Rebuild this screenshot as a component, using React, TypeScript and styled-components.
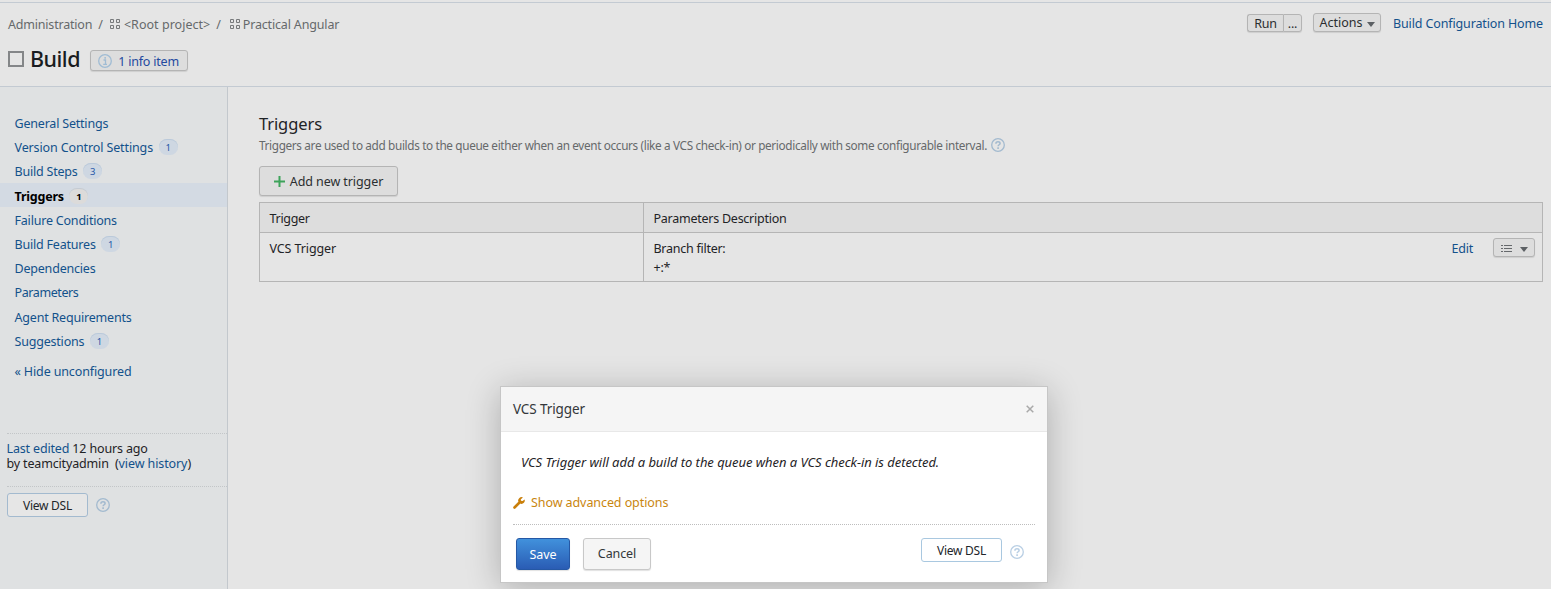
import React from "react";
import styled, { createGlobalStyle } from "styled-components";

const Global = createGlobalStyle`
  * { box-sizing: border-box; }
  body {
    margin: 0;
    background: #e5e5e5;
    color: #1f2326;
    font: 12.5px/15px "Noto Sans", sans-serif;
    letter-spacing: -0.2px;
    overflow: hidden;
  }
  a { color: #13518b; text-decoration: none; }
`;

const T = styled.span<{ $ls?: number }>`
  white-space: pre;
  letter-spacing: ${(p) => p.$ls ?? -0.2}px;
`;

const Page = styled.div`
  height: 589px;
  display: flex;
  flex-direction: column;
`;

const Header = styled.header`
  height: 85px;
  flex: none;
  margin-top: 2px;
  border-top: 1px solid #c3cad2;
  border-bottom: 1px solid #c3cad2;
  padding: 10px 8px 0;
`;

const HeaderRow = styled.div`
  display: flex;
  justify-content: space-between;
  height: 21px;
`;

const Crumbs = styled.nav`
  display: flex;
  align-items: center;
  height: 22px;
  color: #66696b;
`;

const ProjectName = styled(T)`
  margin-left: 2px;
`;

const Slash = styled.span<{ $after: number }>`
  margin: 0 ${(p) => p.$after}px 0 6px;
`;

const HeaderActions = styled.div`
  display: flex;
  height: 19px;
  align-items: flex-end;
`;

const SmallButton = styled.button<{ $w: number; $h?: number }>`
  width: ${(p) => p.$w}px;
  height: ${(p) => p.$h ?? 19}px;
  display: flex;
  align-items: center;
  justify-content: center;
  gap: 4px;
  padding: 0;
  font: inherit;
  letter-spacing: inherit;
  color: #2b2e30;
  background: #dddddd;
  border: 1px solid #b4b4b4;
  border-radius: 3px;
  box-shadow: 0 1px 1px rgba(0, 0, 0, 0.1);
`;

const ButtonGroup = styled.div`
  display: flex;
  margin-right: 11px;
  ${SmallButton}:first-child { border-radius: 3px 0 0 3px; border-right: 0; }
  ${SmallButton}:last-child { border-radius: 0 3px 3px 0; }
`;

const HomeLink = styled.a`
  margin: 0 0 1px 12px;
  width: 150px;
`;

const Caret = styled.span<{ $left?: number }>`
  border: 4px solid transparent;
  border-top: 5px solid #5c6064;
  border-bottom: 0;
  margin: 3px 0 0 ${(p) => p.$left ?? 0}px;
`;

const TitleRow = styled.div`
  display: flex;
  align-items: center;
  height: 30px;
  margin-top: 10px;
`;

const StatusBox = styled.span`
  width: 16px;
  height: 16px;
  border: 2px solid #848688;
  margin-right: 6px;
`;

const Title = styled.h1`
  margin: 0;
  width: 60px;
  font-size: 21.5px;
  line-height: 30px;
  font-weight: 500;
  letter-spacing: -0.5px;
  color: #1a1c20;
`;

const InfoButton = styled(SmallButton)`
  color: #2449a0;
  margin-top: 3px;
  padding: 1px 1px 0 0;
  gap: 6px;
`;

const Body = styled.div`
  flex: 1;
  display: flex;
`;

const Sidebar = styled.aside`
  width: 228px;
  flex: none;
  background: #dfe1e2;
  border-right: 1px solid #c3c8cd;
  padding-top: 24px;
`;

const NavItem = styled.div<{ $active?: boolean; $low?: boolean }>`
  height: ${(p) => (p.$low ? 25 : 24)}px;
  padding: ${(p) => (p.$low ? 1 : 0)}px 0 0 14.5px;
  display: flex;
  align-items: center;
  color: ${(p) => (p.$active ? "#000" : "#13518b")};
  font-weight: ${(p) => (p.$active ? 700 : 400)};
  background: ${(p) => (p.$active ? "#d3dae3" : "transparent")};
  ${(p) => (p.$active ? "padding-top: 2px;" : "")}
`;

const Count = styled.span<{ $active?: boolean }>`
  width: 19px;
  height: 16px;
  margin-left: 5.5px;
  border-radius: 8px;
  background: ${(p) => (p.$active ? "#dcdbda" : "#ced7e2")};
  box-shadow: inset 0 1px 0 ${(p) => (p.$active ? "#c4cbd3" : "#bac9da")};
  color: ${(p) => (p.$active ? "#000" : "#2456a8")};
  font-size: 9.5px;
  line-height: 17px;
  text-align: center;
`;

const HideLink = styled.a`
  display: block;
  margin: 11px 0 0 14.5px;
`;

const Edited = styled.div`
  margin: 54px 0 0 6.5px;
  height: 54px;
  border-top: 1px dotted #c3c6c8;
  border-bottom: 1px dotted #c3c6c8;
  padding-top: 7px;
`;

const DslRow = styled.div<{ $pad: string }>`
  display: flex;
  align-items: center;
  gap: 8px;
  padding: ${(p) => p.$pad};
`;

const DslButton = styled.button<{ $bg: string; $border: string }>`
  width: 81px;
  height: 24px;
  padding: 0;
  font: inherit;
  font-size: 12px;
  letter-spacing: -0.25px;
  color: #22262a;
  background: ${(p) => p.$bg};
  border: 1px solid ${(p) => p.$border};
  border-radius: 3px;
`;

const Main = styled.main`
  flex: 1;
  padding: 26px 8px 0 31px;
`;

const SectionTitle = styled.h2`
  margin: 0;
  font-size: 16.5px;
  line-height: 22px;
  font-weight: 400;
  letter-spacing: -0.1px;
`;

const Note = styled.p`
  margin: 2px 0 0;
  height: 16px;
  display: flex;
  align-items: center;
  gap: 4px;
  font-size: 11.75px;
  color: #66696b;
`;

const AddButton = styled(SmallButton)`
  margin: 13px 0 6px;
  gap: 5px;
`;

const Table = styled.div`
  display: grid;
  grid-template-columns: 384px 1fr;
  grid-template-rows: 30px 48px;
  border: 1px solid #b5b5b5;
`;

const Cell = styled.div<{ $head?: boolean; $left?: boolean }>`
  display: flex;
  align-items: flex-start;
  justify-content: space-between;
  padding: 8px 7px 0 9.5px;
  background: ${(p) => (p.$head ? "#dddddd" : "transparent")};
  border-bottom: ${(p) => (p.$head ? "1px solid #b5b5b5" : "0")};
  border-right: ${(p) => (p.$left ? "1px solid #b5b5b5" : "0")};
`;

const Filter = styled.div`
  display: flex;
  flex-direction: column;
  gap: 4px;
`;

const RowActions = styled.div`
  display: flex;
  gap: 20px;
  margin-top: -3px;
  align-items: flex-start;
`;

const EditLink = styled.a`
  margin-top: 3px;
`;

const Dialog = styled.section`
  position: absolute;
  left: 500px;
  top: 386px;
  width: 548px;
  height: 197px;
  background: #fff;
  border: 1px solid #c6c6c6;
  box-shadow: 0 5px 32px rgba(0, 0, 0, 0.24);
`;

const DialogHead = styled.div`
  height: 45px;
  padding: 0 13px 0 12px;
  display: flex;
  align-items: center;
  justify-content: space-between;
  background: #f5f5f5;
  border-bottom: 1px solid #e8e8e8;
  font-size: 13.5px;
  color: #33373a;
`;

const Description = styled.p`
  margin: 22px 0 0 20px;
  font-size: 13px;
  line-height: 16px;
  font-style: italic;
`;

const Advanced = styled.div`
  display: flex;
  align-items: center;
  gap: 6px;
  margin: 25px 12px 0;
  height: 30px;
  padding-bottom: 14px;
  border-bottom: 1px dotted #bdbdbd;
  color: #c9860f;
`;

const Footer = styled.div`
  display: flex;
  padding: 13px 23px 0 15px;
`;

const DialogButton = styled.button<{ $primary?: boolean }>`
  width: ${(p) => (p.$primary ? 54 : 68)}px;
  height: 32px;
  padding: 0 0 ${(p) => (p.$primary ? 0 : 2)}px;
  margin-right: 13px;
  border-radius: 3px;
  font: inherit;
  letter-spacing: -0.1px;
  color: ${(p) => (p.$primary ? "#fff" : "#33373a")};
  background: ${(p) => (p.$primary ? "linear-gradient(#4191dc, #2a5cb4)" : "#f5f5f5")};
  border: 1px solid ${(p) => (p.$primary ? "#2558a5" : "#c8c8c8")};
  box-shadow: 0 1px 1px rgba(0, 0, 0, 0.12);
`;

const Spacer = styled.div`
  flex: 1;
`;

const HelpSvg = styled.svg<{ $down?: number }>`
  flex: none;
  margin-top: ${(p) => p.$down ?? 0}px;
`;

const Help = ({ color = "#a3bacf", down }: { color?: string; down?: number }) => (
  <HelpSvg $down={down} width="14" height="14" viewBox="0 0 14 14" fill="none" stroke={color}>
    <circle cx="7" cy="7" r="6.3" strokeWidth="1.3" />
    <path d="M4.900 5.700C4.900 4.400 5.900 3.700 7 3.700s2.100.7 2.100 1.700c0 1.300-2 1.400-2 2.900" strokeWidth="1.500" />
    <path d="M7.100 9.300v1.600" strokeWidth="1.600" />
  </HelpSvg>
);

const Info = () => (
  <svg width="14" height="14" viewBox="0 0 14 14" fill="none" stroke="#a0bcd4">
    <circle cx="7" cy="7" r="6.300" strokeWidth="1.300" />
    <path d="M5.500 6h2v4M5.200 10.300h3.800" strokeWidth="1.300" />
    <path d="M6.400 3.900h1.500" strokeWidth="1.600" />
  </svg>
);

const ProjectIcon = () => (
  <svg width="11" height="11" viewBox="0 0 11 11" fill="none" stroke="#77797b">
    <path d="M.5.5h3v3h-3zM6.500.5h3v3h-3zM.5 6.500h3v3h-3zM6.500 6.500h3v3h-3z" />
  </svg>
);

const Plus = () => (
  <svg width="11" height="11" viewBox="0 0 11 11" stroke="#3da35a" strokeWidth="2">
    <path d="M5.500 0v11M0 5.500h11" />
  </svg>
);

const ListIcon = () => (
  <svg width="11" height="11" viewBox="0 0 11 11" stroke="#66696c">
    <path d="M0 3.500h2M3 3.500h8M0 6.500h2M3 6.500h8M0 9.500h2M3 9.500h8" />
  </svg>
);

const Wrench = () => (
  <svg width="12" height="12" viewBox="0 0 12 12">
    <path d="M1.500 10.500 7 5" stroke="#c97f0a" strokeWidth="2.600" strokeLinecap="round" />
    <path d="M10 .5A3.400 3.400 0 0 0 5.200 4.300L7.700 6.800A3.400 3.400 0 0 0 11.600 2.400L9.600 4 7.900 3.700 7.800 2.200z" fill="#c97f0a" />
  </svg>
);

const Close = () => (
  <svg width="8" height="8" viewBox="0 0 8 8" stroke="#a9a9a9" strokeWidth="1.500">
    <path d="M.7.7l6.600 6.600M7.300.7L.7 7.300" />
  </svg>
);

const nav: { label: string; count?: number; ls?: number; low?: boolean; active?: boolean }[] = [
  { label: "General Settings" },
  { label: "Version Control Settings", count: 1, ls: -0.12 },
  { label: "Build Steps", count: 3 },
  { label: "Triggers", count: 1, active: true },
  { label: "Failure Conditions", low: true },
  { label: "Build Features", count: 1 },
  { label: "Dependencies" },
  { label: "Parameters", ls: -0.4 },
  { label: "Agent Requirements", low: true },
  { label: "Suggestions", count: 1 },
];

export default function App() {
  return (
    <Page>
      <Global />
      <Header>
        <HeaderRow>
          <Crumbs>
            <T>Administration</T>
            <Slash $after={7}>/</Slash>
            <ProjectIcon />
            <T $ls={0.03}>{" <Root project>"}</T>
            <Slash $after={9}>/</Slash>
            <ProjectIcon />
            <ProjectName $ls={-0.16}>Practical Angular</ProjectName>
          </Crumbs>
          <HeaderActions>
            <ButtonGroup>
              <SmallButton $w={36} $h={18}>Run</SmallButton>
              <SmallButton $w={19} $h={18}>...</SmallButton>
            </ButtonGroup>
            <SmallButton $w={68}>
              <T $ls={0}>Actions</T>
              <Caret />
            </SmallButton>
            <HomeLink>
              <T $ls={-0.13}>Build Configuration Home</T>
            </HomeLink>
          </HeaderActions>
        </HeaderRow>
        <TitleRow>
          <StatusBox />
          <Title>Build</Title>
          <InfoButton $w={98} $h={21}>
            <Info />
            1 info item
          </InfoButton>
        </TitleRow>
      </Header>
      <Body>
        <Sidebar>
          {nav.map((n) => (
            <NavItem key={n.label} $active={n.active} $low={n.low}>
              <T $ls={n.ls}>{n.label}</T>
              {n.count && <Count $active={n.active}>{n.count}</Count>}
            </NavItem>
          ))}
          <HideLink>
            <T $ls={-0.13}>« Hide unconfigured</T>
          </HideLink>
          <Edited>
            <T $ls={-0.16}><a>Last edited</a> 12 hours ago</T>
            <br />
            <T $ls={-0.16}>{"by teamcityadmin  "}</T>
            <T $ls={-0.1}>
              (<a>view history</a>)
            </T>
          </Edited>
          <DslRow $pad="6px 0 0 7px">
            <DslButton $bg="#e6e6e6" $border="#a3bacf">
              View DSL
            </DslButton>
            <Help />
          </DslRow>
        </Sidebar>
        <Main>
          <SectionTitle>Triggers</SectionTitle>
          <Note>
            <T $ls={-0.342}>
              Triggers are used to add builds to the queue either when an event occurs (like a VCS check-in) or periodically with some configurable interval.
            </T>
            <Help />
          </Note>
          <AddButton $w={139} $h={30}>
            <Plus />
            <T $ls={-0.08}>Add new trigger</T>
          </AddButton>
          <Table>
            <Cell $head $left>
              <T $ls={-0.3}>Trigger</T>
            </Cell>
            <Cell $head>
              <T $ls={-0.25}>Parameters Description</T>
            </Cell>
            <Cell $left>
              <T $ls={-0.1}>VCS Trigger</T>
            </Cell>
            <Cell>
              <Filter>
                <T $ls={-0.26}>Branch filter:</T>
                <T>+:*</T>
              </Filter>
              <RowActions>
                <EditLink>Edit</EditLink>
                <SmallButton $w={42}>
                  <ListIcon />
                  <Caret $left={4} />
                </SmallButton>
              </RowActions>
            </Cell>
          </Table>
        </Main>
      </Body>
      <Dialog>
        <DialogHead>
          <T $ls={-0.1}>VCS Trigger</T>
          <Close />
        </DialogHead>
        <Description>
          <T $ls={-0.05}>VCS Trigger will add a build to the queue when a VCS check-in is detected.</T>
        </Description>
        <Advanced>
          <Wrench />
          <T $ls={-0.08}>Show advanced options</T>
        </Advanced>
        <Footer>
          <DialogButton $primary>Save</DialogButton>
          <DialogButton>Cancel</DialogButton>
          <Spacer />
          <DslRow $pad="0 0 8px">
            <DslButton $bg="#fff" $border="#a9c8e0">
              View DSL
            </DslButton>
            <Help color="#b9cfe4" down={3} />
          </DslRow>
        </Footer>
      </Dialog>
    </Page>
  );
}
